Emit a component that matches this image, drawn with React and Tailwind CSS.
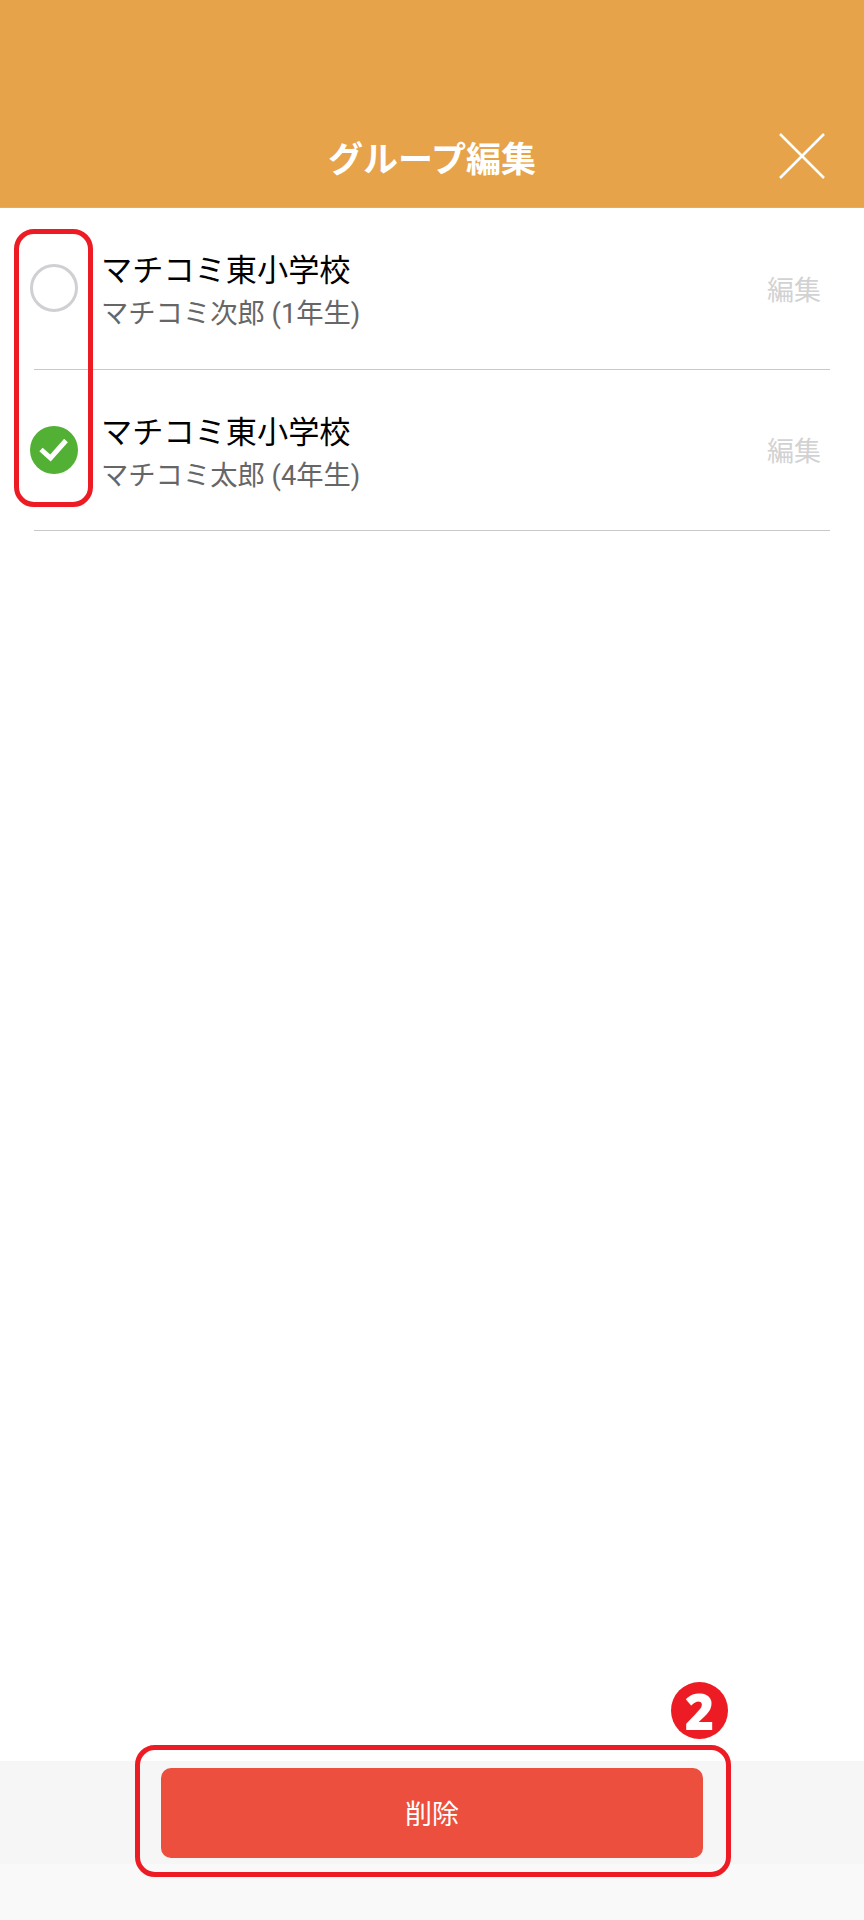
import React from 'react'

const rows = [
  { id: 1, school: 'マチコミ東小学校', child: 'マチコミ次郎 (1年生)', checked: false },
  { id: 2, school: 'マチコミ東小学校', child: 'マチコミ太郎 (4年生)', checked: true },
]

function Check({ checked }) {
  if (!checked) {
    return <div className="w-12 h-12 shrink-0 -ml-1 -mt-px rounded-full border-[3px] border-[#cfcfd4] bg-white"></div>
  }
  return (
    <div className="w-12 h-12 shrink-0 -ml-1 -mt-px rounded-full bg-[#52b035] flex items-center justify-center">
      <svg width="48" height="48" viewBox="0 0 48 48" fill="none">
        <path d="M11 23.5 L20.5 32 L36 14.5" stroke="#fff" strokeWidth="5" />
      </svg>
    </div>
  )
}

export default function App() {
  return (
    <div
      className="relative h-[1920px] w-[864px] flex flex-col bg-white overflow-hidden"
      style={{ fontFamily: 'Roboto, "Noto Sans CJK JP", sans-serif' }}
    >
      {/* header */}
      <header className="h-[208px] shrink-0 bg-[#e7a349] border-b border-[#b9b5a8] grid grid-cols-[1fr_auto_1fr] items-end pb-[21px]">
        <div></div>
        <h1 className="text-[35px] leading-[50px] font-bold text-white">グループ編集</h1>
        <div className="flex justify-end pr-[39px] pb-[7px]">
          <svg width="46" height="46" viewBox="0 0 46 46" fill="none">
            <path d="M1 1 L45 45 M45 1 L1 45" stroke="#fff" strokeWidth="2.5" />
          </svg>
        </div>
      </header>

      {/* list */}
      <ul className="mx-[34px]">
        {rows.map((r) => (
          <li key={r.id} className="h-[161px] flex items-center border-b border-[#c9c9c9] first:h-[162px]">
            <Check checked={r.checked} />
            <div className="ml-[23px] flex-1 mt-[6px]">
              <p className="text-[31.2px] leading-[42px] text-black">{r.school}</p>
              <p className="text-[27.3px] leading-[38px] text-[#666666] mt-[3px]">{r.child}</p>
            </div>
            <span className="text-[27px] leading-[38px] text-[#d2d2d2] pr-[9px] mt-[4px]">編集</span>
          </li>
        ))}
      </ul>

      <div className="flex-1"></div>

      {/* footer */}
      <div className="h-[103px] shrink-0 bg-[#f6f6f6] flex justify-center pt-[7px]">
        <button className="w-[542px] h-[90px] rounded-[10px] bg-[#ec4f3e] text-white text-[27px] pt-[4px]">削除</button>
      </div>
      <div className="h-[56px] shrink-0 bg-[#f9f9f9]"></div>

      {/* red annotations */}
      <div className="absolute left-[14px] top-[229px] w-[79px] h-[278px] rounded-[20px] border-[5px] border-[#ed1c24]"></div>
      <div className="absolute left-[135px] top-[1745px] w-[596px] h-[132px] rounded-[20px] border-[5px] border-[#ed1c24]"></div>
      <div className="absolute left-[671px] top-[1682px] w-[57px] h-[57px] rounded-full bg-[#ed1c24] flex items-center justify-center text-white text-[50px] leading-none font-black" style={{ fontFamily: '"Open Sans", sans-serif' }}>2</div>
    </div>
  )
}
